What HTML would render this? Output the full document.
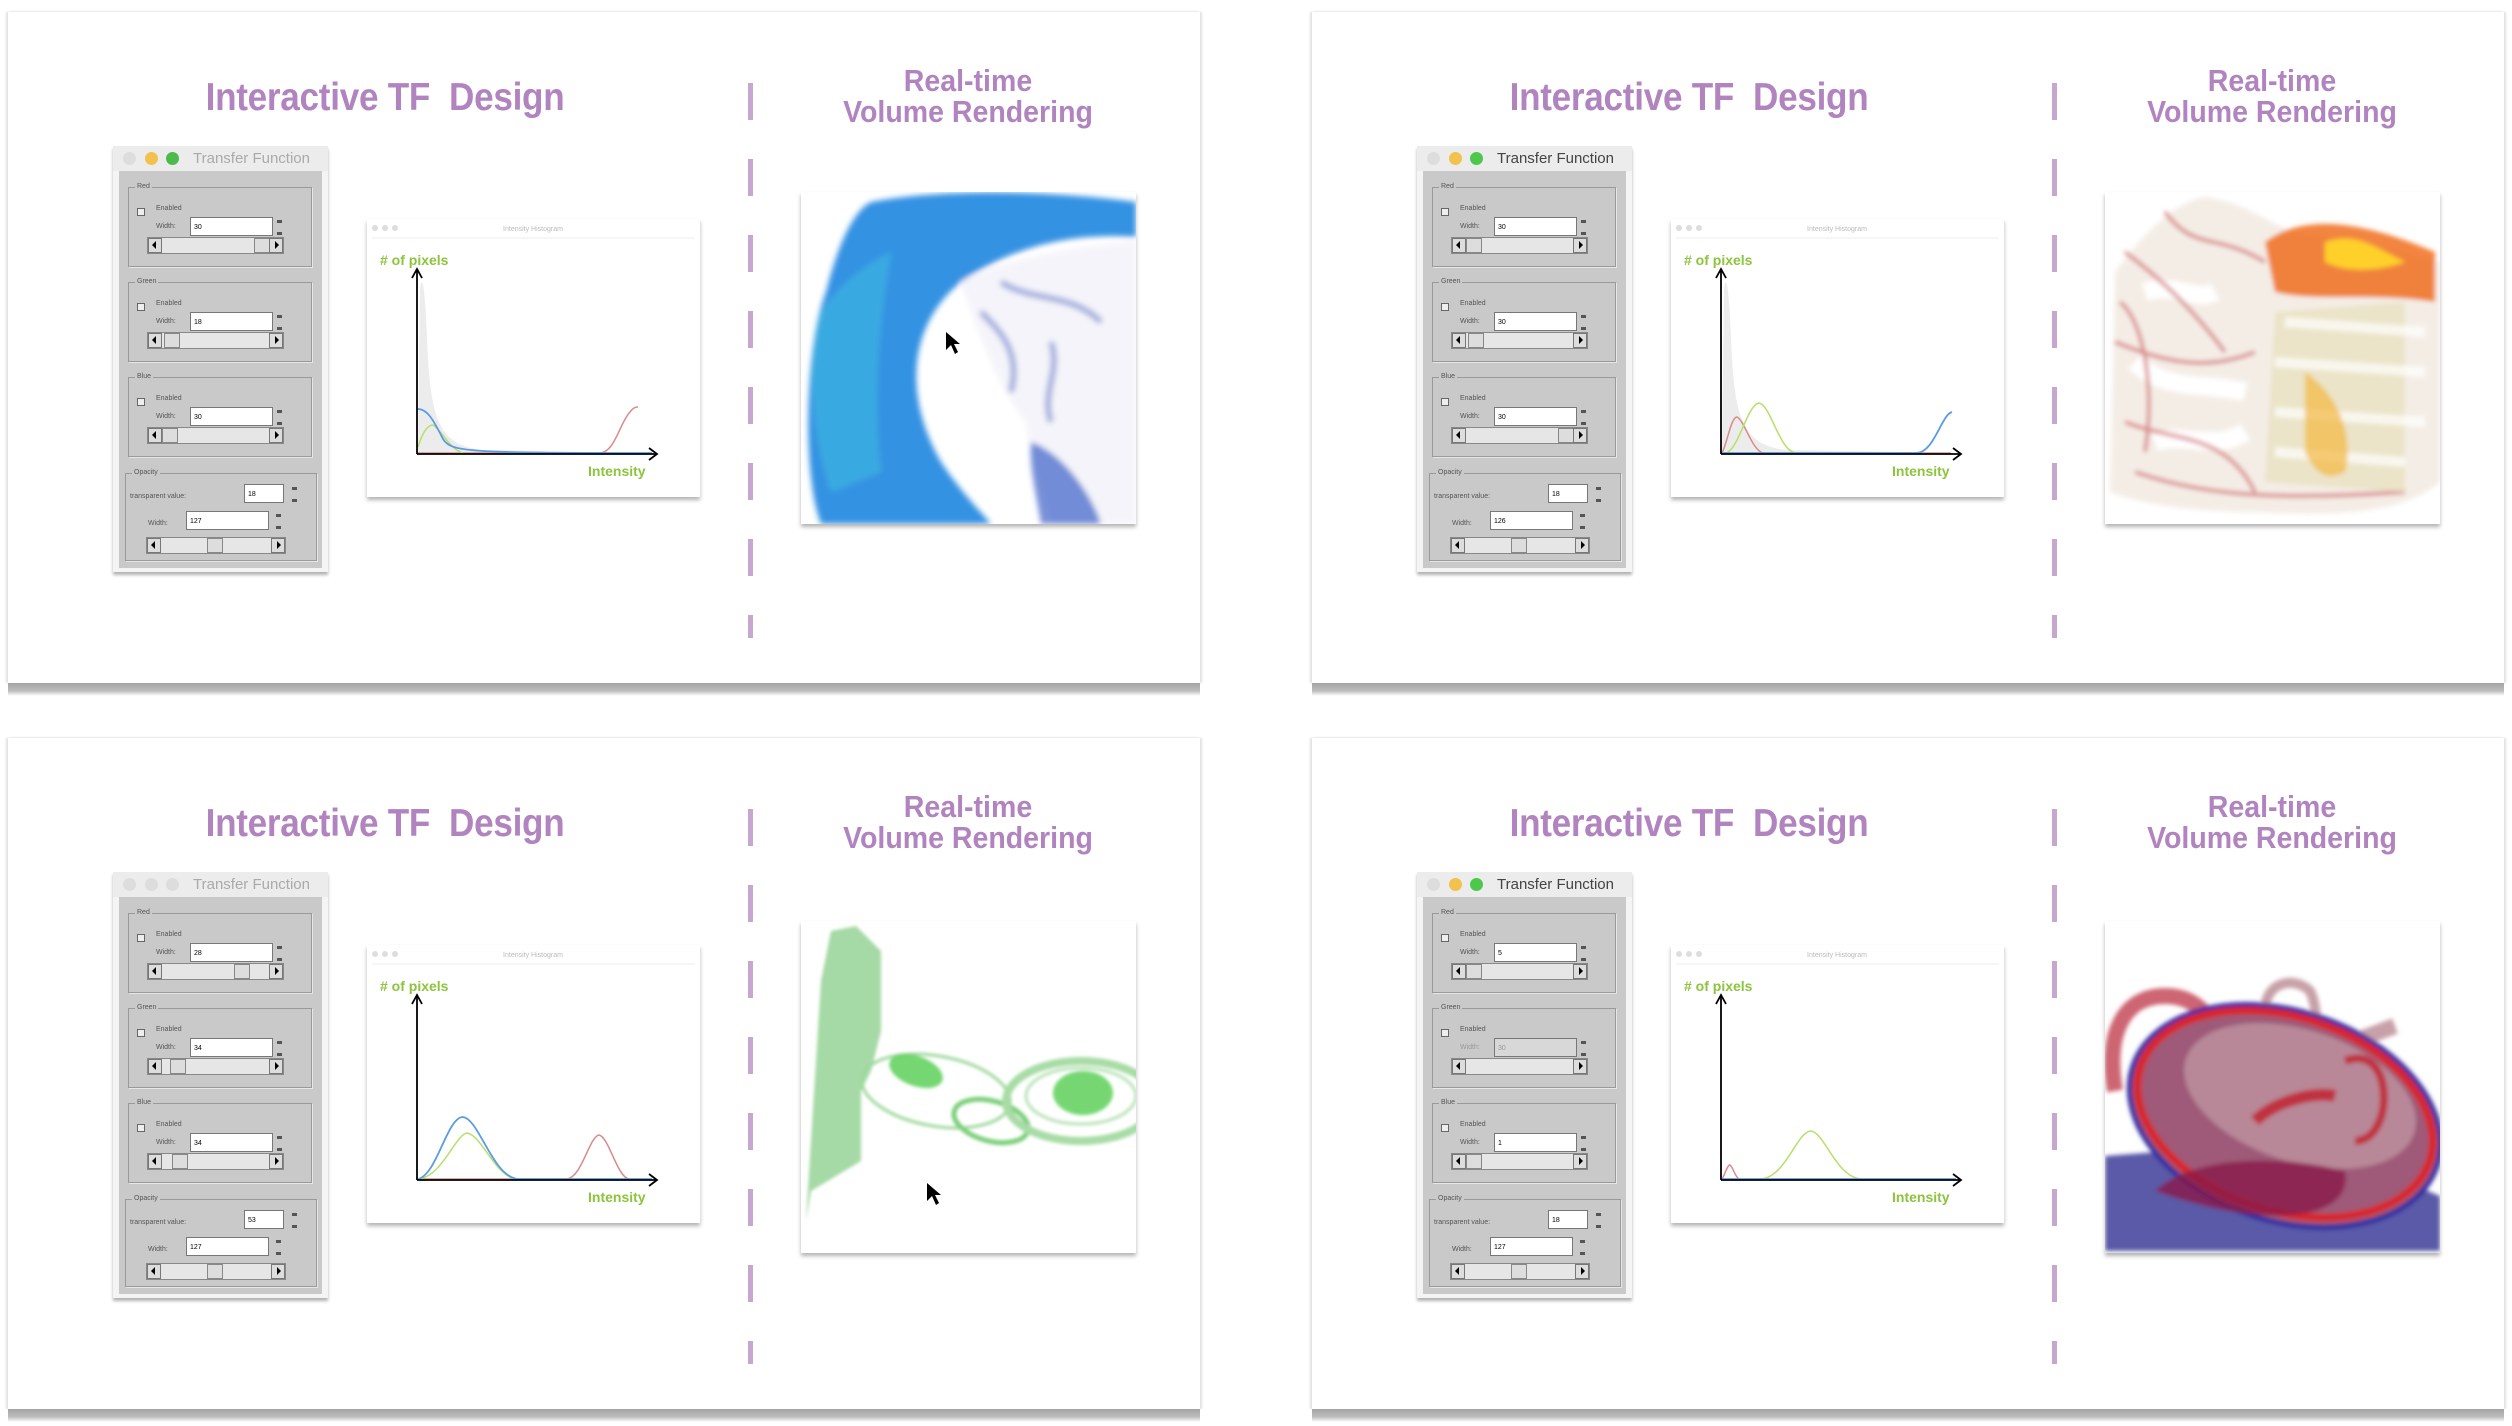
<!DOCTYPE html>
<html><head><meta charset="utf-8"><style>
body{margin:0;width:2512px;height:1422px;background:#fff;position:relative;overflow:hidden;font-family:"Liberation Sans",sans-serif}
.q{position:absolute;width:1210px;height:700px}
.card{position:absolute;left:8px;top:12px;width:1192px;height:671px;background:#fff;box-shadow:-2px 0 2px rgba(0,0,0,.12),2px 0 2px rgba(0,0,0,.12)}
.shd{position:absolute;left:8px;top:683px;width:1192px;height:13px;background:linear-gradient(#a4a4a4,#bdbdbd 60%,rgba(220,220,220,0));}
.t1{position:absolute;left:185px;width:400px;top:76px;text-align:center;font-family:"Liberation Sans Narrow","Liberation Sans",sans-serif;font-weight:bold;font-size:39px;color:#b184c0;letter-spacing:-0.3px;transform:scaleX(0.9)}
.t2{position:absolute;left:818px;width:300px;top:65px;text-align:center;font-family:"Liberation Sans Narrow","Liberation Sans",sans-serif;font-weight:bold;font-size:31px;line-height:31px;color:#b184c0;transform:scaleX(0.92)}
.dash{position:absolute;left:748px;top:83px;width:5px;height:555px;background:repeating-linear-gradient(#c7a6d0 0 37px,transparent 37px 76px)}
.tf{position:absolute;left:113px;top:146px;width:215px;height:426px;background:#f4f4f4;box-shadow:0 3px 3px rgba(0,0,0,.3)}
.tb{position:absolute;left:0;top:0;width:215px;height:25px;background:#ececec}
.lt{position:absolute;top:6px;width:13px;height:13px;border-radius:50%}
.tt{position:absolute;left:80px;top:4px;font-size:15px;color:#aaa;white-space:nowrap}
.bd{position:absolute;left:6px;top:25px;width:203px;height:397px;background:#c9c9c9}
.g{position:absolute;left:9px;width:182px;height:78px;border:1px solid #9a9a9a;box-shadow:1px 1px 0 #e6e6e6}
.g span{position:absolute;font-size:7px;color:#555;white-space:nowrap}
.gl{left:6px;top:-5px;background:#c9c9c9;padding:0 2px}
.cb{position:absolute;left:8px;top:20px;width:6px;height:6px;border:1px solid #666;background:#eee}
.fld{position:absolute;left:61px;top:29px;height:19px;background:#fff;border:1px solid #777;font-size:7px;line-height:19px;padding-left:3px;box-sizing:border-box;width:83px}
.sp{position:absolute;left:148px;top:32px;width:5px;height:15px;border-top:3px solid #555;border-bottom:3px solid #555;box-sizing:border-box}
.sb{position:absolute;left:18px;top:49px;width:137px;height:17px;background:#e6e6e6;border:1px solid #888;box-sizing:border-box}
.sb:before,.sb:after{content:"";position:absolute;top:0;width:14px;height:15px;background:#ddd;border:1px solid #777;box-sizing:border-box}
.sb:before{left:0}.sb:after{right:0}
.ar{position:absolute;top:3px;width:0;height:0;border-top:4px solid transparent;border-bottom:4px solid transparent;z-index:2}
.al{left:4px;border-right:4px solid #000}.arr{right:4px;border-left:4px solid #000}
.th{position:absolute;top:0;width:16px;height:15px;background:#ddd;border:1px solid #888;box-sizing:border-box}
.hist{position:absolute;left:367px;top:219px;width:333px;height:278px;background:#fff;box-shadow:0 3px 4px rgba(0,0,0,.3)}
.rend{position:absolute;left:801px;top:192px;width:335px;height:332px;background:#fff;box-shadow:0 3px 4px rgba(0,0,0,.3);overflow:hidden}
</style></head><body>

<!-- Q1 top-left -->
<div class="q" style="left:0;top:0">
<div class="card"></div><div class="shd"></div>
<div class="t1">Interactive TF&nbsp; Design</div>
<div class="t2">Real-time<br>Volume Rendering</div>
<div class="dash"></div>
<div class="tf"><div class="tb"><i class="lt" style="left:10px;background:#ddd"></i><i class="lt" style="left:32px;background:#f2c14e"></i><i class="lt" style="left:53px;background:#4cbb4c"></i><span class="tt">Transfer Function</span></div>
<div class="bd">
<div class="g" style="top:16px"><span class="gl">Red</span><i class="cb"></i><span style="left:27px;top:17px">Enabled</span><span style="left:27px;top:35px">Width:</span><div class="fld">30</div><i class="sp"></i><div class="sb"><i class="ar al"></i><i class="ar arr"></i><b class="th" style="left:106px"></b></div></div>
<div class="g" style="top:111px"><span class="gl">Green</span><i class="cb"></i><span style="left:27px;top:17px">Enabled</span><span style="left:27px;top:35px">Width:</span><div class="fld">18</div><i class="sp"></i><div class="sb"><i class="ar al"></i><i class="ar arr"></i><b class="th" style="left:16px"></b></div></div>
<div class="g" style="top:206px"><span class="gl">Blue</span><i class="cb"></i><span style="left:27px;top:17px">Enabled</span><span style="left:27px;top:35px">Width:</span><div class="fld">30</div><i class="sp"></i><div class="sb"><i class="ar al"></i><i class="ar arr"></i><b class="th" style="left:14px"></b></div></div>
<div class="g" style="top:302px;left:6px;width:190px;height:86px"><span class="gl">Opacity</span><span style="left:4px;top:19px">transparent value:</span><div class="fld" style="left:118px;top:10px;width:40px">18</div><i class="sp" style="left:166px;top:13px"></i><span style="left:22px;top:46px">Width:</span><div class="fld" style="left:60px;top:37px">127</div><i class="sp" style="left:150px;top:40px"></i><div class="sb" style="top:63px;left:20px;width:140px"><i class="ar al"></i><i class="ar arr"></i><b class="th" style="left:60px"></b></div></div>
</div></div>
<svg class="hist" viewBox="0 0 333 278"><circle cx="8" cy="9" r="3" fill="#ddd"/><circle cx="18" cy="9" r="3" fill="#ddd"/><circle cx="28" cy="9" r="3" fill="#ddd"/><text x="166" y="12" font-size="7" fill="#bbb" text-anchor="middle" font-family="Liberation Sans">Intensity Histogram</text><line x1="5" y1="19" x2="328" y2="19" stroke="#eee"/>
<path d="M51,234 L53,70 C55,55 58,60 61,140 C65,205 75,226 115,231 L280,234 Z" fill="#ececec"/>
<path d="M51,234 L232,234 C248,234 252,205 263,193 C266,189 268,188 271,188" fill="none" stroke="#d98a8a" stroke-width="1.5"/>
<path d="M51,228 C55,215 60,206 66,206 C74,210 82,230 96,234" fill="none" stroke="#b6e06a" stroke-width="1.5"/>
<path d="M51,190 C60,190 66,200 76,220 C84,233 100,234 285,234" fill="none" stroke="#5b9be6" stroke-width="1.8"/>
<line x1="50" y1="235" x2="50" y2="52" stroke="#000" stroke-width="1.8"/><path d="M45,59 L50,50 L55,59" fill="none" stroke="#000" stroke-width="1.8"/>
<line x1="50" y1="235" x2="289" y2="235" stroke="#000" stroke-width="1.8"/><path d="M282,229 L290,235 L282,241" fill="none" stroke="#000" stroke-width="1.8"/>
<text x="13" y="46" font-size="14" font-weight="bold" fill="#8cc43c" font-family="Liberation Sans">#&#160;of pixels</text><text x="221" y="257" font-size="14" font-weight="bold" fill="#8cc43c" font-family="Liberation Sans">Intensity</text></svg>
<svg class="rend" viewBox="0 0 335 332"><defs><filter id="b1"><feGaussianBlur stdDeviation="3"/></filter></defs>
<g filter="url(#b1)">
<path d="M70,10 C150,-5 260,0 335,10 L335,45 C270,40 210,55 160,90 C110,130 100,200 140,270 C160,300 180,320 190,332 L20,332 C0,280 5,150 25,100 C35,60 50,20 70,10 Z" fill="#1f86e0" opacity=".9"/>
<path d="M20,120 C40,90 70,70 90,60 C80,120 70,200 80,280 L30,300 C10,240 5,170 20,120 Z" fill="#3ab0e0" opacity=".8"/>
<path d="M160,90 C200,70 260,55 335,50 L335,332 L250,332 C240,300 230,270 225,230 C200,200 180,150 160,90 Z" fill="#f4f4fa"/>
<path d="M230,250 C260,260 290,300 300,332 L240,332 C235,300 228,275 230,250 Z" fill="#3a5fc8" opacity=".7"/>
<path d="M180,120 C200,140 220,160 210,200 M250,150 C260,180 240,200 250,230 M200,90 C230,110 270,100 300,130" stroke="#4a5fc0" stroke-width="6" fill="none" opacity=".5"/>
</g><path d="M145,140 L145,158 L150,153 L154,162 L157,160 L153,152 L159,152 Z" fill="#000"/></svg>
</div>

<!-- Q2 top-right -->
<div class="q" style="left:1304px;top:0">
<div class="card"></div><div class="shd"></div>
<div class="t1">Interactive TF&nbsp; Design</div>
<div class="t2">Real-time<br>Volume Rendering</div>
<div class="dash"></div>
<div class="tf"><div class="tb"><i class="lt" style="left:10px;background:#ddd"></i><i class="lt" style="left:32px;background:#f2c14e"></i><i class="lt" style="left:53px;background:#4cc94c"></i><span class="tt" style="color:#444">Transfer Function</span></div>
<div class="bd">
<div class="g" style="top:16px"><span class="gl">Red</span><i class="cb"></i><span style="left:27px;top:17px">Enabled</span><span style="left:27px;top:35px">Width:</span><div class="fld">30</div><i class="sp"></i><div class="sb"><i class="ar al"></i><i class="ar arr"></i><b class="th" style="left:14px"></b></div></div>
<div class="g" style="top:111px"><span class="gl">Green</span><i class="cb"></i><span style="left:27px;top:17px">Enabled</span><span style="left:27px;top:35px">Width:</span><div class="fld">30</div><i class="sp"></i><div class="sb"><i class="ar al"></i><i class="ar arr"></i><b class="th" style="left:16px"></b></div></div>
<div class="g" style="top:206px"><span class="gl">Blue</span><i class="cb"></i><span style="left:27px;top:17px">Enabled</span><span style="left:27px;top:35px">Width:</span><div class="fld">30</div><i class="sp"></i><div class="sb"><i class="ar al"></i><i class="ar arr"></i><b class="th" style="left:106px"></b></div></div>
<div class="g" style="top:302px;left:6px;width:190px;height:86px"><span class="gl">Opacity</span><span style="left:4px;top:19px">transparent value:</span><div class="fld" style="left:118px;top:10px;width:40px">18</div><i class="sp" style="left:166px;top:13px"></i><span style="left:22px;top:46px">Width:</span><div class="fld" style="left:60px;top:37px">126</div><i class="sp" style="left:150px;top:40px"></i><div class="sb" style="top:63px;left:20px;width:140px"><i class="ar al"></i><i class="ar arr"></i><b class="th" style="left:60px"></b></div></div>
</div></div>
<svg class="hist" viewBox="0 0 333 278"><circle cx="8" cy="9" r="3" fill="#ddd"/><circle cx="18" cy="9" r="3" fill="#ddd"/><circle cx="28" cy="9" r="3" fill="#ddd"/><text x="166" y="12" font-size="7" fill="#bbb" text-anchor="middle" font-family="Liberation Sans">Intensity Histogram</text><line x1="5" y1="19" x2="328" y2="19" stroke="#eee"/>
<path d="M51,234 L53,70 C55,55 58,60 61,140 C65,205 75,226 115,231 L280,234 Z" fill="#ececec"/>
<path d="M51,234 C56,225 60,198 66,198 C74,202 80,230 92,234 L280,234" fill="none" stroke="#d98a8a" stroke-width="1.5"/>
<path d="M55,234 C68,230 76,186 88,184 C100,186 108,232 125,234" fill="none" stroke="#b6e06a" stroke-width="1.5"/>
<path d="M51,234 L245,234 C258,234 265,215 272,203 C276,196 278,194 281,193" fill="none" stroke="#5b9be6" stroke-width="1.8"/>
<line x1="50" y1="235" x2="50" y2="52" stroke="#000" stroke-width="1.8"/><path d="M45,59 L50,50 L55,59" fill="none" stroke="#000" stroke-width="1.8"/>
<line x1="50" y1="235" x2="289" y2="235" stroke="#000" stroke-width="1.8"/><path d="M282,229 L290,235 L282,241" fill="none" stroke="#000" stroke-width="1.8"/>
<text x="13" y="46" font-size="14" font-weight="bold" fill="#8cc43c" font-family="Liberation Sans">#&#160;of pixels</text><text x="221" y="257" font-size="14" font-weight="bold" fill="#8cc43c" font-family="Liberation Sans">Intensity</text></svg>
<svg class="rend" viewBox="0 0 335 332"><defs><filter id="b2"><feGaussianBlur stdDeviation="2.5"/></filter></defs>
<g filter="url(#b2)">
<path d="M10,80 C40,40 70,10 100,5 C140,10 160,30 190,40 C250,45 300,60 335,70 L335,290 C300,320 240,325 150,320 C80,320 30,310 5,300 Z" fill="#f0e6dc" opacity=".7"/>
<path d="M40,100 C70,90 90,110 110,100 M30,170 C60,200 100,190 140,200 M50,250 C80,240 110,260 140,240" stroke="#fff" stroke-width="18" fill="none"/>
<path d="M20,60 C60,90 90,120 120,160 M10,150 C60,170 100,180 150,160 M20,230 C70,250 120,240 150,300 M30,280 C90,300 150,310 300,300 M60,20 C90,60 110,40 160,70 M15,110 C40,130 50,200 40,260" stroke="#c9505a" stroke-width="4" fill="none" opacity=".6"/>
<path d="M160,50 C200,20 260,30 330,60 L330,110 C270,100 210,110 170,100 Z" fill="#f07020" opacity=".85"/>
<path d="M220,50 C250,40 270,55 300,70 C270,80 240,80 220,70 Z" fill="#ffd02a"/>
<path d="M170,120 L300,110 L300,300 L160,290 Z" fill="#e9e2c0" opacity=".8"/>
<path d="M180,130 L320,140 M170,170 L320,180 M170,220 L320,230 M170,260 L300,270" stroke="#fff" stroke-width="10" opacity=".7"/>
<path d="M200,180 C230,200 250,240 240,280 C220,290 210,280 200,260" fill="#f4b840" opacity=".7"/>
</g></svg>
</div>

<!-- Q3 bottom-left -->
<div class="q" style="left:0;top:726px">
<div class="card"></div><div class="shd"></div>
<div class="t1">Interactive TF&nbsp; Design</div>
<div class="t2">Real-time<br>Volume Rendering</div>
<div class="dash"></div>
<div class="tf"><div class="tb"><i class="lt" style="left:10px;background:#ddd"></i><i class="lt" style="left:32px;background:#ddd"></i><i class="lt" style="left:53px;background:#ddd"></i><span class="tt">Transfer Function</span></div>
<div class="bd">
<div class="g" style="top:16px"><span class="gl">Red</span><i class="cb"></i><span style="left:27px;top:17px">Enabled</span><span style="left:27px;top:35px">Width:</span><div class="fld">28</div><i class="sp"></i><div class="sb"><i class="ar al"></i><i class="ar arr"></i><b class="th" style="left:86px"></b></div></div>
<div class="g" style="top:111px"><span class="gl">Green</span><i class="cb"></i><span style="left:27px;top:17px">Enabled</span><span style="left:27px;top:35px">Width:</span><div class="fld">34</div><i class="sp"></i><div class="sb"><i class="ar al"></i><i class="ar arr"></i><b class="th" style="left:22px"></b></div></div>
<div class="g" style="top:206px"><span class="gl">Blue</span><i class="cb"></i><span style="left:27px;top:17px">Enabled</span><span style="left:27px;top:35px">Width:</span><div class="fld">34</div><i class="sp"></i><div class="sb"><i class="ar al"></i><i class="ar arr"></i><b class="th" style="left:24px"></b></div></div>
<div class="g" style="top:302px;left:6px;width:190px;height:86px"><span class="gl">Opacity</span><span style="left:4px;top:19px">transparent value:</span><div class="fld" style="left:118px;top:10px;width:40px">53</div><i class="sp" style="left:166px;top:13px"></i><span style="left:22px;top:46px">Width:</span><div class="fld" style="left:60px;top:37px">127</div><i class="sp" style="left:150px;top:40px"></i><div class="sb" style="top:63px;left:20px;width:140px"><i class="ar al"></i><i class="ar arr"></i><b class="th" style="left:60px"></b></div></div>
</div></div>
<svg class="hist" viewBox="0 0 333 278"><circle cx="8" cy="9" r="3" fill="#ddd"/><circle cx="18" cy="9" r="3" fill="#ddd"/><circle cx="28" cy="9" r="3" fill="#ddd"/><text x="166" y="12" font-size="7" fill="#bbb" text-anchor="middle" font-family="Liberation Sans">Intensity Histogram</text><line x1="5" y1="19" x2="328" y2="19" stroke="#eee"/>
<path d="M51,234 L200,234 C215,232 222,192 232,190 C242,192 250,232 262,234" fill="none" stroke="#d98a8a" stroke-width="1.5"/>
<path d="M51,234 C75,232 88,190 100,188 C115,190 128,232 150,234" fill="none" stroke="#b6e06a" stroke-width="1.5"/>
<path d="M51,234 C70,230 80,172 96,172 C112,174 125,230 150,234 L285,234" fill="none" stroke="#5b9be6" stroke-width="1.8"/>
<line x1="50" y1="235" x2="50" y2="52" stroke="#000" stroke-width="1.8"/><path d="M45,59 L50,50 L55,59" fill="none" stroke="#000" stroke-width="1.8"/>
<line x1="50" y1="235" x2="289" y2="235" stroke="#000" stroke-width="1.8"/><path d="M282,229 L290,235 L282,241" fill="none" stroke="#000" stroke-width="1.8"/>
<text x="13" y="46" font-size="14" font-weight="bold" fill="#8cc43c" font-family="Liberation Sans">#&#160;of pixels</text><text x="221" y="257" font-size="14" font-weight="bold" fill="#8cc43c" font-family="Liberation Sans">Intensity</text></svg>
<svg class="rend" style="top:195px" viewBox="0 0 335 332"><defs><filter id="b3"><feGaussianBlur stdDeviation="1.5"/></filter></defs>
<g filter="url(#b3)" fill="none">
<path d="M30,10 L55,5 L80,30 L80,110 L70,150 L60,170 L60,240 L10,270 L5,300 L20,60 Z" fill="#8fd090" opacity=".8"/>
<ellipse cx="135" cy="170" rx="75" ry="35" stroke="#9ed89c" stroke-width="3" transform="rotate(10 135 170)"/>
<ellipse cx="190" cy="200" rx="38" ry="20" stroke="#7ccf7a" stroke-width="5" transform="rotate(15 190 200)"/>
<ellipse cx="280" cy="180" rx="75" ry="40" stroke="#a8dca6" stroke-width="8"/>
<ellipse cx="280" cy="175" rx="55" ry="28" stroke="#b8e2b6" stroke-width="3"/>
<ellipse cx="282" cy="172" rx="30" ry="22" fill="#5ed05a" opacity=".85"/>
<ellipse cx="115" cy="150" rx="28" ry="15" fill="#5cd058" opacity=".85" transform="rotate(20 115 150)"/>
</g><path d="M126,262 L126,280 L131,275 L135,284 L138,282 L134,274 L140,274 Z" fill="#000"/></svg>
</div>

<!-- Q4 bottom-right -->
<div class="q" style="left:1304px;top:726px">
<div class="card"></div><div class="shd"></div>
<div class="t1">Interactive TF&nbsp; Design</div>
<div class="t2">Real-time<br>Volume Rendering</div>
<div class="dash"></div>
<div class="tf"><div class="tb"><i class="lt" style="left:10px;background:#ddd"></i><i class="lt" style="left:32px;background:#f2c14e"></i><i class="lt" style="left:53px;background:#4cc94c"></i><span class="tt" style="color:#444">Transfer Function</span></div>
<div class="bd">
<div class="g" style="top:16px"><span class="gl">Red</span><i class="cb"></i><span style="left:27px;top:17px">Enabled</span><span style="left:27px;top:35px">Width:</span><div class="fld">5</div><i class="sp"></i><div class="sb"><i class="ar al"></i><i class="ar arr"></i><b class="th" style="left:14px"></b></div></div>
<div class="g" style="top:111px"><span class="gl">Green</span><i class="cb"></i><span style="left:27px;top:17px">Enabled</span><span style="left:27px;top:35px;color:#999">Width:</span><div class="fld" style="background:#d8d8d8;color:#999">30</div><i class="sp"></i><div class="sb"><i class="ar al"></i><i class="ar arr"></i></div></div>
<div class="g" style="top:206px"><span class="gl">Blue</span><i class="cb"></i><span style="left:27px;top:17px">Enabled</span><span style="left:27px;top:35px">Width:</span><div class="fld">1</div><i class="sp"></i><div class="sb"><i class="ar al"></i><i class="ar arr"></i><b class="th" style="left:14px"></b></div></div>
<div class="g" style="top:302px;left:6px;width:190px;height:86px"><span class="gl">Opacity</span><span style="left:4px;top:19px">transparent value:</span><div class="fld" style="left:118px;top:10px;width:40px">18</div><i class="sp" style="left:166px;top:13px"></i><span style="left:22px;top:46px">Width:</span><div class="fld" style="left:60px;top:37px">127</div><i class="sp" style="left:150px;top:40px"></i><div class="sb" style="top:63px;left:20px;width:140px"><i class="ar al"></i><i class="ar arr"></i><b class="th" style="left:60px"></b></div></div>
</div></div>
<svg class="hist" viewBox="0 0 333 278"><circle cx="8" cy="9" r="3" fill="#ddd"/><circle cx="18" cy="9" r="3" fill="#ddd"/><circle cx="28" cy="9" r="3" fill="#ddd"/><text x="166" y="12" font-size="7" fill="#bbb" text-anchor="middle" font-family="Liberation Sans">Intensity Histogram</text><line x1="5" y1="19" x2="328" y2="19" stroke="#eee"/>
<path d="M51,234 C54,230 56,220 59,220 C62,222 64,232 68,234" fill="none" stroke="#d98a8a" stroke-width="1.5"/>
<path d="M90,234 C115,232 126,186 140,186 C154,188 165,232 190,234" fill="none" stroke="#b6e06a" stroke-width="1.5"/>
<path d="M51,234 L285,234" fill="none" stroke="#5b9be6" stroke-width="1.8"/>
<line x1="50" y1="235" x2="50" y2="52" stroke="#000" stroke-width="1.8"/><path d="M45,59 L50,50 L55,59" fill="none" stroke="#000" stroke-width="1.8"/>
<line x1="50" y1="235" x2="289" y2="235" stroke="#000" stroke-width="1.8"/><path d="M282,229 L290,235 L282,241" fill="none" stroke="#000" stroke-width="1.8"/>
<text x="13" y="46" font-size="14" font-weight="bold" fill="#8cc43c" font-family="Liberation Sans">#&#160;of pixels</text><text x="221" y="257" font-size="14" font-weight="bold" fill="#8cc43c" font-family="Liberation Sans">Intensity</text></svg>
<svg class="rend" style="top:195px" viewBox="0 0 335 332"><defs><filter id="b4"><feGaussianBlur stdDeviation="2"/></filter></defs>
<g filter="url(#b4)">
<path d="M0,235 L200,220 L335,275 L335,330 L0,330 Z" fill="#5a5aa8"/>
<path d="M10,170 C0,110 20,75 60,75 C90,75 105,95 110,110" fill="none" stroke="#c04050" stroke-width="16" opacity=".8"/>
<path d="M160,90 C160,60 190,55 205,70 C210,80 210,90 212,100" fill="none" stroke="#c8a0a8" stroke-width="10"/>
<path d="M250,120 L290,105" stroke="#c8a0a8" stroke-width="16"/>
<ellipse cx="180" cy="195" rx="160" ry="105" transform="rotate(18 180 195)" fill="#9e5a78"/>
<ellipse cx="180" cy="195" rx="160" ry="105" transform="rotate(18 180 195)" fill="none" stroke="#2a2aa0" stroke-width="5"/>
<ellipse cx="180" cy="193" rx="152" ry="97" transform="rotate(18 180 193)" fill="none" stroke="#d8282a" stroke-width="8"/>
<ellipse cx="195" cy="175" rx="120" ry="66" transform="rotate(18 195 175)" fill="#b88898"/>
<path d="M50,270 C80,240 160,230 240,250 C250,300 160,310 50,270 Z" fill="#8a1a4a" opacity=".8"/>
<path d="M150,200 C170,180 210,170 230,175" stroke="#c03040" stroke-width="12" fill="none"/>
<path d="M240,140 C290,120 290,220 250,220" stroke="#c03040" stroke-width="8" fill="none"/>
</g></svg>
</div>
</body></html>
